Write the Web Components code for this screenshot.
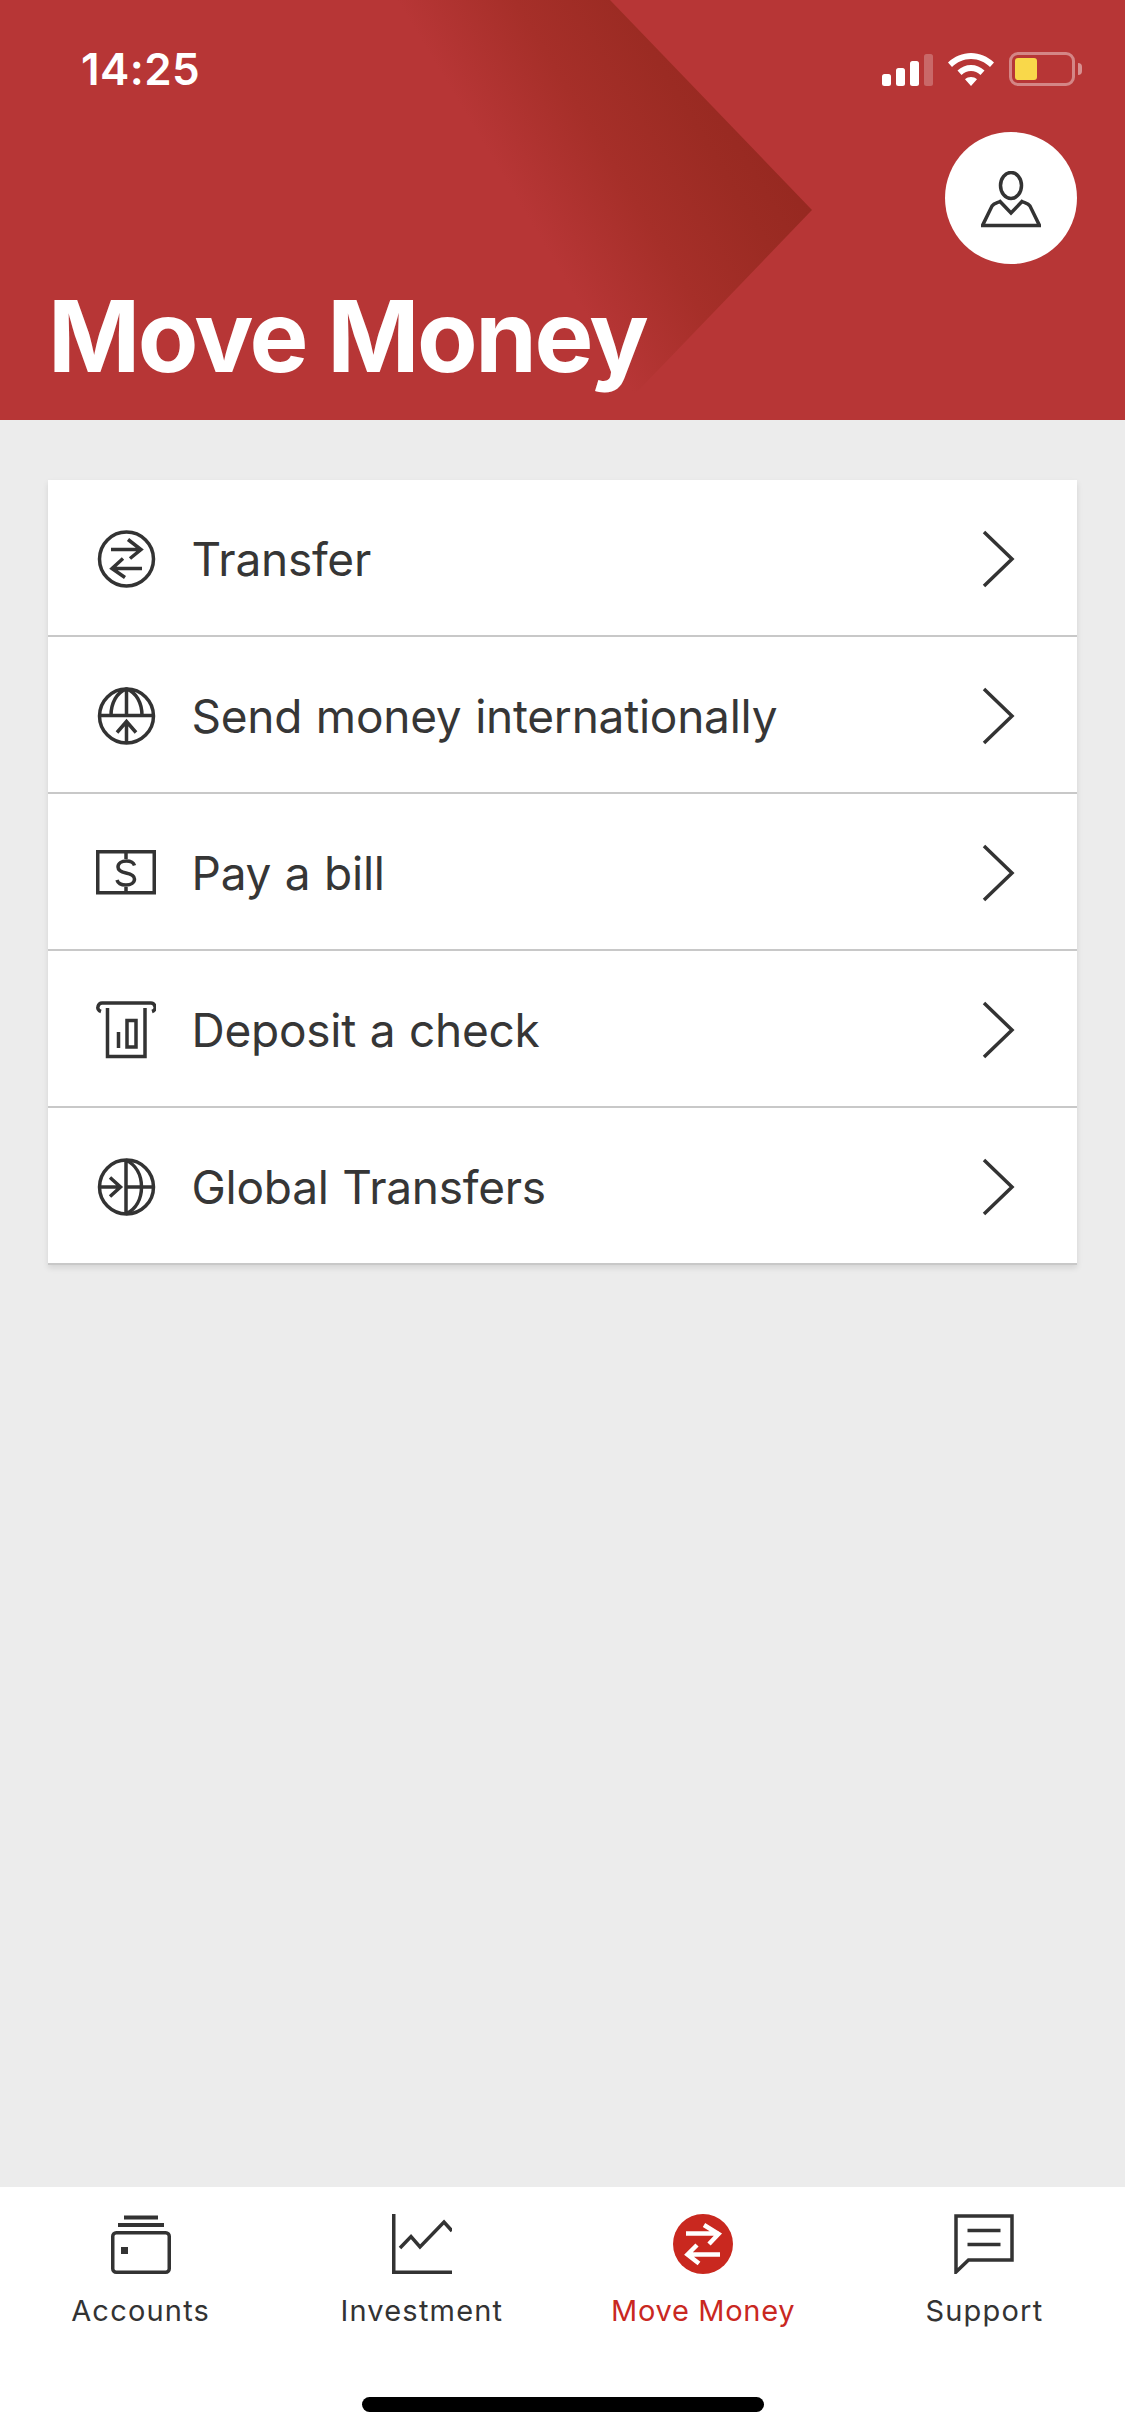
<!doctype html>
<html><head><meta charset="utf-8">
<style>
html,body{margin:0;padding:0;width:1125px;height:2436px;overflow:hidden;background:#ececec;font-family:Inter,sans-serif}
</style></head><body>
<mm-app>
  <mm-header slot="header" title-text="Move Money"></mm-header>
  <mm-card>
    <mm-row icon="transfer">Transfer</mm-row>
    <mm-row icon="send">Send money internationally</mm-row>
    <mm-row icon="bill">Pay a bill</mm-row>
    <mm-row icon="deposit">Deposit a check</mm-row>
    <mm-row icon="global">Global Transfers</mm-row>
  </mm-card>
  <mm-tabbar slot="tabs">
    <mm-tab icon="accounts">Accounts</mm-tab>
    <mm-tab icon="investment">Investment</mm-tab>
    <mm-tab icon="move" active>Move Money</mm-tab>
    <mm-tab icon="support">Support</mm-tab>
  </mm-tabbar>
</mm-app>
<script>
const ICONS={
 transfer:`<circle cx="30.5" cy="30" r="27"/><path d="M15 20.5H45M32 10.5L45 20.5L34 29.5M46 39.5H16M27 29.5L16 39.5L29 48.5"/>`,
 send:`<circle cx="30.5" cy="30" r="27"/><path d="M3.5 29.5H57.5M30.5 3V29.5M15 29.5C15 17 21 6 30.5 3C40 6 46 17 46 29.5M30.5 35V57M21 46.5L30.5 35.5L40 46.5"/>`,
 bill:`<rect x="1.75" y="8.75" width="56.5" height="41"/><path d="M30 8V16M30 44V50M38.5 22.5C37.5 19.5 34 18 30.5 18C25.5 18 22 20.5 22 24C22 27.5 25.5 29 30 30C34.5 31 38.5 32.5 38.5 36C38.5 39.5 35 42 30 42C26 42 22 40.5 21 37"/>`,
 deposit:`<path d="M5 11.5C2 10.5 1.5 8 2 6.5C2.7 4 4 3 6 3H55C57 3 58.3 4 59 6.5C59.5 8 59 10.5 56 11.5M11.5 8V56.5H49V8"/><path d="M22.5 32V48M31 20.5H40V47H31Z"/>`,
 global:`<circle cx="30.5" cy="30" r="27"/><path d="M3.5 30H25M14 20.5L24.5 30L14 39.5M30 3V57M30 3C40 8 45.5 18 45.5 30C45.5 42 40 52 30 57M30 30H57.5"/>`,
 accounts:`<rect x="1.75" y="18.75" width="56.5" height="39.5" rx="3.5"/><path d="M13 3.5H47M7 11H53" stroke-width="4"/><rect x="10" y="33" width="7" height="7" fill="#333" stroke="none"/>`,
 investment:`<path d="M1.75 0V58.25H60M8 34L19 22.5L28 33L52 8L60 17"/>`,
 move:`<circle cx="30" cy="30" r="30" fill="#c9281f" stroke="none"/><path stroke="#fff" stroke-width="4.5" d="M13 19.5H46M31 11L45.5 20L36 30M47 40.5H14M24 31L14.5 40.5L26 49.5"/>`,
 support:`<path d="M2 2H58V46H14.5L2 58Z"/><path d="M13.5 16.5H46.5M13.5 30.5H46.5"/>`,
 person:`<ellipse cx="30" cy="14.5" rx="10.5" ry="13"/><path d="M1.5 54.5H58.5L49 35C47 32 44 32 41 30.5L30 42L19 30.5C16 32 13 32 11 35Z"/>`
};
function icon(name,size=60,sw=3.5){return `<svg width="${size}" height="${size}" viewBox="0 0 60 60" fill="none" stroke="#333" stroke-width="${sw}" aria-hidden="true">${ICONS[name]}</svg>`}
function def(tag,render){customElements.define(tag,class extends HTMLElement{constructor(){super();this.attachShadow({mode:'open'})}connectedCallback(){this.shadowRoot.innerHTML=render(this)}})}

def('mm-app',()=>`<style>:host{display:flex;flex-direction:column;width:1125px;height:2436px;background:#ececec}
main{flex:1;padding:60px 48px 0}</style><slot name="header"></slot><main><slot></slot></main><slot name="tabs"></slot>`);

def('mm-header',el=>`<style>
:host{display:flex;flex-direction:column;position:relative;height:420px;box-sizing:border-box;background:#b73636;color:#fff;overflow:hidden}
.arrow{position:absolute;left:0;top:0;width:812px;height:420px;clip-path:polygon(0 0,610px 0,812px 210px,610px 420px,0 420px);background:linear-gradient(59deg,#b73636 61%,#a62f29 72%,#9b2b23 82%,#952820 90%)}
mm-status,.av,h1{position:relative}
.av{align-self:flex-end;margin:46px 48px 0 0;width:132px;height:132px;border-radius:50%;background:#fff;display:flex;align-items:center;justify-content:center}
.av svg{margin-top:5px}
h1{margin:auto 0 0;padding:0 0 34px 48px;font:700 99px/100px Inter,sans-serif;letter-spacing:-2.4px}
</style><div class="arrow"></div><mm-status></mm-status><div class="av">${icon('person',60,3.5)}</div><h1>${el.getAttribute('title-text')}</h1>`);

def('mm-status',()=>`<style>
:host{display:flex;align-items:center;justify-content:space-between;height:34px;margin-top:52px;padding:0 43px 0 81px;color:#fff}
.t{font:600 44px/34px Inter,sans-serif;letter-spacing:.4px}
.r{display:flex;align-items:flex-end;gap:15px}
.s{display:flex;align-items:flex-end;gap:5px;height:33px}
.s i{display:block;width:9px;background:#fff;border-radius:2.5px}
.w{display:block}
.b{display:flex;align-items:center;gap:3px;margin-left:0}
.c{width:66px;height:34px;box-sizing:border-box;border:3px solid rgba(255,255,255,.4);border-radius:9px;padding:3px}
.c i{display:block;width:22px;height:22px;background:#f9d84a;border-radius:3px}
.n{width:4px;height:12px;background:rgba(255,255,255,.45);border-radius:0 4px 4px 0}
</style><span class="t">14:25</span><div class="r"><div class="s"><i style="height:12px"></i><i style="height:18px"></i><i style="height:25px"></i><i style="height:32px;opacity:.25"></i></div>
<svg class="w" width="46" height="33" viewBox="0 0 46 33"><path fill="#fff" d="M23 0C31.5 0 39.5 3.5 46 9.5L42 14C37 9 30.5 6 23 6C15.5 6 9 9 4 14L0 9.5C6.5 3.5 14.5 0 23 0ZM23 12C28 12 32.8 14 36.5 17.5L32.5 22C29.8 19.5 26.5 18 23 18C19.5 18 16.2 19.5 13.5 22L9.5 17.5C13.2 14 18 12 23 12ZM23 24C25.3 24 27.3 24.8 29 26.3L23 33L17 26.3C18.7 24.8 20.7 24 23 24Z"/></svg>
<div class="b"><div class="c"><i></i></div><div class="n"></div></div></div>`);

def('mm-card',()=>`<style>:host{display:block;background:#fff;box-shadow:0 3px 6px rgba(0,0,0,.1)}</style><slot></slot>`);

def('mm-row',el=>`<style>
:host{display:flex;align-items:center;height:157px;box-sizing:border-box;border-bottom:2px solid #c8c8c8;padding:0 59px 0 48px;color:#363636;font:400 46px/56px Inter,sans-serif;letter-spacing:-.25px;word-spacing:1px}
.l{margin-left:35.5px;flex:1;padding-top:2px}
svg{display:block;margin-top:2px}
</style>${icon(el.getAttribute('icon'))}<span class="l"><slot></slot></span>
<svg width="36" height="58" viewBox="0 0 36 58" fill="none" stroke="#333" stroke-width="3.5"><path d="M2 2L30 29L2 56"/></svg>`);

def('mm-tabbar',()=>`<style>:host{display:flex;flex-direction:column;height:249px;box-sizing:border-box;background:#fff;padding-top:27px}
.tabs{display:grid;grid-template-columns:repeat(4,1fr)}
.h{width:402px;height:15px;border-radius:8px;background:#000;margin:auto auto 24px}
</style><div class="tabs"><slot></slot></div><div class="h"></div>`);

def('mm-tab',el=>`<style>
:host{display:flex;flex-direction:column;align-items:center;color:${el.hasAttribute('active')?'#c9281f':'#333'};font:400 29px/36px Inter,sans-serif;letter-spacing:${el.hasAttribute('active')?'.7px':'1.2px'}}
svg{display:block;margin-bottom:19px}
</style>${icon(el.getAttribute('icon'),60,3.5)}<slot></slot>`);
</script>
</body></html>
